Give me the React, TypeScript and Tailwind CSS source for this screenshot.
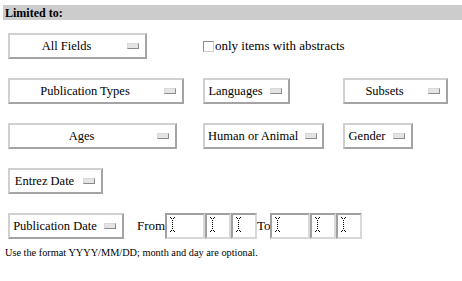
import React from "react";

function Indicator() {
  return (
    <span className="ml-[7px] block h-[6px] w-[12px] shrink-0 border border-t-[#d8d8d8] border-l-[#d8d8d8] border-r-[#8a8a8a] border-b-[#8a8a8a] bg-[#e4e4e4]" />
  );
}

function Select({ label, w }: { label: string; w: string }) {
  return (
    <div
      className={`flex h-[26px] shrink-0 items-center border-2 border-t-[#d0d0d0] border-l-[#d0d0d0] border-r-[#a4a4a4] border-b-[#a4a4a4] bg-white pl-[3px] pr-[6px] ${w}`}
    >
      <span className="flex-1 whitespace-nowrap text-center">{label}</span>
      <Indicator />
    </div>
  );
}

function Cursor() {
  return (
    <svg width="5" height="15" viewBox="0 0 5 15" className="ml-[3px] mt-[2px]">
      <rect x="0" y="0" width="1" height="1" fill="#000" />
      <rect x="4" y="0" width="1" height="1" fill="#000" />
      <rect x="1" y="1" width="1" height="1" fill="#000" />
      <rect x="3" y="1" width="1" height="1" fill="#000" />
      <rect x="2" y="3" width="1" height="1" fill="#000" />
      <rect x="2" y="5" width="1" height="1" fill="#000" />
      <rect x="2" y="7" width="1" height="1" fill="#000" />
      <rect x="2" y="9" width="1" height="1" fill="#000" />
      <rect x="2" y="11" width="1" height="1" fill="#000" />
      <rect x="1" y="13" width="1" height="1" fill="#000" />
      <rect x="3" y="13" width="1" height="1" fill="#000" />
      <rect x="0" y="14" width="1" height="1" fill="#000" />
      <rect x="4" y="14" width="1" height="1" fill="#000" />
    </svg>
  );
}

function Input({ w }: { w: string }) {
  return (
    <div
      className={`flex h-[26px] shrink-0 items-start border-2 border-t-[#a0a0a0] border-l-[#a0a0a0] border-r-[#d8d8d8] border-b-[#d8d8d8] bg-white ${w}`}
    >
      <Cursor />
    </div>
  );
}

export default function App() {
  return (
    <div className="h-[281px] w-[462px] overflow-hidden bg-white font-['Liberation_Serif','Times_New_Roman',serif] text-[12.5px] text-black">
      <div className="ml-[3px] mt-[5px] flex h-[15px] items-center bg-[#cccccc] pl-[2px] text-[12px] font-bold leading-none">
        Limited to:
      </div>

      <div className="mt-[13px] flex flex-col gap-[19px] pl-[8px]">
        <div className="grid h-[26px] grid-cols-[195px_140px_auto] items-center">
          <Select label="All Fields" w="w-[139px]" />
          <div className="col-span-2 flex items-center text-[13px]">
            <span className="mr-[1px] block h-[11px] w-[11px] border border-t-[#8c8c8c] border-l-[#8c8c8c] border-r-[#cfcfcf] border-b-[#cfcfcf] bg-white" />
            only items with abstracts
          </div>
        </div>

        <div className="grid h-[26px] grid-cols-[195px_140px_auto] items-center">
          <Select label="Publication Types" w="w-[176px]" />
          <Select label="Languages" w="w-[87px]" />
          <Select label="Subsets" w="w-[105px]" />
        </div>

        <div className="grid h-[26px] grid-cols-[195px_140px_auto] items-center">
          <Select label="Ages" w="w-[169px]" />
          <Select label="Human or Animal" w="w-[121px]" />
          <Select label="Gender" w="w-[70px]" />
        </div>

        <div className="flex h-[26px] items-center">
          <Select label="Entrez Date" w="w-[95px]" />
        </div>

        <div className="flex h-[26px] items-center">
          <Select label="Publication Date" w="w-[116px]" />
          <span className="ml-[13px] w-[28px] text-[13px]">From</span>
          <Input w="w-[40px]" />
          <Input w="w-[26px]" />
          <Input w="w-[26px]" />
          <span className="w-[13px] text-[13px]">To</span>
          <Input w="w-[40px]" />
          <Input w="w-[26px]" />
          <Input w="w-[26px]" />
        </div>
      </div>

      <div className="ml-[5px] mt-[8px] text-[10.3px] leading-[12px]">
        Use the format YYYY/MM/DD; month and day are optional.
      </div>
    </div>
  );
}
